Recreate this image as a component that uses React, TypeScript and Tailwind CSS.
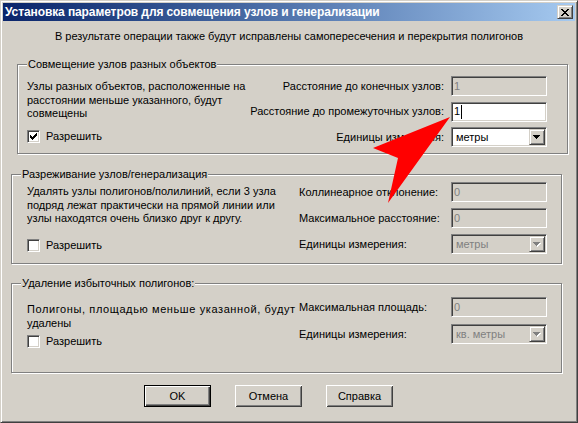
import type {ReactNode} from 'react';

const sunken =
    'border border-t-[#808080] border-l-[#808080] border-r-white border-b-white shadow-[inset_1px_1px_0_#404040,inset_-1px_-1px_0_#d4d0c8]';
const raised =
    'border border-t-[#d4d0c8] border-l-[#d4d0c8] border-r-[#404040] border-b-[#404040] shadow-[inset_1px_1px_0_#fff,inset_-1px_-1px_0_#808080]';

function Field({value, disabled, caret}: {value: string; disabled?: boolean; caret?: boolean}) {
    return (
        <div
            className={`flex h-[20px] w-[96px] items-center pl-[2px] leading-[13px] ${sunken} ${
                disabled ? 'bg-[#d4d0c8] text-[#808080]' : 'bg-white text-black'
            }`}
        >
            <span>{value}</span>
            {caret && <span className="ml-px h-[14px] w-px bg-black"/>}
        </div>
    );
}

function Arrow({disabled}: {disabled?: boolean}) {
    const d = 'M0 0h7v1H0z M1 1h5v1H1z M2 2h3v1H2z M3 3h1v1H3z';
    return (
        <svg width="8" height="5" viewBox="0 0 8 5" shapeRendering="crispEdges">
            {disabled && <path d={d} fill="#fff" transform="translate(1 1)"/>}
            <path d={d} fill={disabled ? '#808080' : '#000'}/>
        </svg>
    );
}

function Combo({value, disabled}: {value: string; disabled?: boolean}) {
    return (
        <div
            className={`flex h-[20px] w-[96px] items-center p-px ${sunken} ${
                disabled ? 'bg-[#d4d0c8] text-[#808080]' : 'bg-white text-black'
            }`}
        >
            <span className="flex-1 pl-[3px] leading-[13px]">{value}</span>
            <span className={`flex h-[16px] w-[16px] items-center justify-center bg-[#d4d0c8] pt-px ${raised}`}>
                <Arrow disabled={disabled}/>
            </span>
        </div>
    );
}

function Check({checked}: {checked?: boolean}) {
    return (
        <div className="flex items-center gap-[6px]">
            <span className={`flex h-[13px] w-[13px] items-center justify-center bg-white ${sunken}`}>
                {checked && (
                    <svg width="7" height="7" viewBox="0 0 7 7" shapeRendering="crispEdges">
                        <path
                            d="M6 0h1v1H6z M5 1h2v1H5z M0 2h1v1H0z M4 2h3v1H4z M0 3h2v1H0z M3 3h3v1H3z M0 4h5v1H0z M1 5h3v1H1z M2 6h1v1H2z"
                            fill="#000"
                        />
                    </svg>
                )}
            </span>
            <span className="leading-[13px]">Разрешить</span>
        </div>
    );
}

function Group({title, className, children}: {title: string; className?: string; children: ReactNode}) {
    return (
        <div className={`relative w-[551px] border border-[#808080] shadow-[inset_1px_1px_0_#fff,1px_1px_0_#fff] ${className}`}>
            <span className="absolute -top-[7px] left-[9px] bg-[#d4d0c8] px-px leading-[13px]">{title}</span>
            {children}
        </div>
    );
}

function Button({label, primary}: {label: string; primary?: boolean}) {
    return (
        <button
            className={`flex h-[22px] w-[67px] items-center justify-center bg-[#d4d0c8] leading-[13px] ${
                primary
                    ? 'border border-black shadow-[inset_1px_1px_0_#fff,inset_-1px_-1px_0_#404040,inset_-2px_-2px_0_#808080]'
                    : 'shadow-[inset_1px_1px_0_#fff,inset_-1px_-1px_0_#404040,inset_2px_2px_0_#d4d0c8,inset_-2px_-2px_0_#808080]'
            }`}
        >
            {label}
        </button>
    );
}

function Row({label, children}: {label: string; children: ReactNode}) {
    return (
        <div className="grid h-[20px] grid-cols-[152px_96px] items-center">
            <span className="leading-[13px]">{label}</span>
            {children}
        </div>
    );
}

export default function App() {
    return (
        <div className="relative h-[423px] w-[578px] font-['Liberation_Sans',Arial,sans-serif] text-[11px] text-black">
            <div
                className={`flex h-full w-full flex-col border border-t-[#d4d0c8] border-l-[#d4d0c8] border-r-[#404040] border-b-[#404040] bg-[#d4d0c8] p-[2px] shadow-[inset_1px_1px_0_#fff,inset_-1px_-1px_0_#808080]`}
            >
                <div className="flex h-[18px] items-center bg-linear-to-r from-[#0a246a] to-[#a6caf0] pl-[2px] pr-[2px]">
                    <span className="text-[12px] font-bold leading-[14px] tracking-[-0.1px] text-white">
                        Установка параметров для совмещения узлов и генерализации
                    </span>
                    <span className={`ml-auto flex h-[14px] w-[16px] items-center justify-center bg-[#d4d0c8] ${raised}`}>
                        <svg width="8" height="7" viewBox="0 0 8 7" shapeRendering="crispEdges">
                            <path
                                d="M0 0h2v1H0z M6 0h2v1H6z M1 1h2v1H1z M5 1h2v1H5z M2 2h4v1H2z M3 3h2v1H3z M2 4h4v1H2z M1 5h2v1H1z M5 5h2v1H5z M0 6h2v1H0z M6 6h2v1H6z"
                                fill="#000"
                            />
                        </svg>
                    </span>
                </div>

                <p className="mt-[9px] text-center leading-[13px]">
                    В результате операции также будут исправлены самопересечения и перекрытия полигонов
                </p>

                <div className="flex flex-col pl-[8px]">
                    <Group title="Совмещение узлов разных объектов" className="ml-[6px] mt-[21px] h-[90px]">
                        <div className="flex pr-[20px]">
                            <div className="flex-1 pl-[9px] pt-[15px]">
                                <p className="leading-[13.5px]">
                                    Узлы разных объектов, расположенные на<br/>
                                    расстоянии меньше указанного, будут<br/>
                                    совмещены
                                </p>
                                <div className="mt-[9px]">
                                    <Check checked/>
                                </div>
                            </div>
                            <div className="flex flex-col items-end gap-[5.5px] pt-[11px]">
                                <div className="flex items-center gap-[7px]">
                                    <span className="leading-[13px]">Расстояние до конечных узлов:</span>
                                    <Field value="1" disabled/>
                                </div>
                                <div className="flex items-center gap-[7px]">
                                    <span className="leading-[13px]">Расстояние до промежуточных узлов:</span>
                                    <Field value="1" caret/>
                                </div>
                                <div className="flex items-center gap-[7px]">
                                    <span className="leading-[13px]">Единицы измерения:</span>
                                    <Combo value="метры"/>
                                </div>
                            </div>
                        </div>
                    </Group>

                    <Group title="Разреживание узлов/генерализация" className="mt-[20px] h-[90px]">
                        <div className="flex pr-[14px]">
                            <div className="flex-1 pl-[15px] pt-[10px]">
                                <p className="leading-[13.5px]">
                                    Удалять узлы полигонов/полилиний, если 3 узла<br/>
                                    подряд лежат практически на прямой линии или<br/>
                                    узлы находятся очень близко друг к другу.
                                </p>
                                <div className="mt-[13px]">
                                    <Check/>
                                </div>
                            </div>
                            <div className="flex flex-col gap-[6px] pt-[7px]">
                                <Row label="Коллинеарное отклонение:">
                                    <Field value="0" disabled/>
                                </Row>
                                <Row label="Максимальное расстояние:">
                                    <Field value="0" disabled/>
                                </Row>
                                <Row label="Единицы измерения:">
                                    <Combo value="метры" disabled/>
                                </Row>
                            </div>
                        </div>
                    </Group>

                    <Group title="Удаление избыточных полигонов:" className="mt-[19px] h-[90px]">
                        <div className="flex pr-[14px]">
                            <div className="flex-1 pl-[15px] pt-[19px]">
                                <p className="leading-[13.5px]">
                                    <span className="tracking-[0.6px]">Полигоны, площадью меньше указанной, будут</span><br/>
                                    удалены
                                </p>
                                <div className="mt-[5px]">
                                    <Check/>
                                </div>
                            </div>
                            <div className="flex flex-col gap-[7px] pt-[13px]">
                                <Row label="Максимальная площадь:">
                                    <Field value="0" disabled/>
                                </Row>
                                <Row label="Единицы измерения:">
                                    <Combo value="кв. метры" disabled/>
                                </Row>
                            </div>
                        </div>
                    </Group>
                </div>

                <div className="ml-[141px] mt-[12px] flex gap-[24px]">
                    <Button label="OK" primary/>
                    <Button label="Отмена"/>
                    <Button label="Справка"/>
                </div>
            </div>

            <svg className="pointer-events-none absolute left-0 top-0" width="578" height="423" viewBox="0 0 578 423">
                <polygon points="450,117 373,148 398,158 388,203" fill="#ff0000"/>
            </svg>
        </div>
    );
}
